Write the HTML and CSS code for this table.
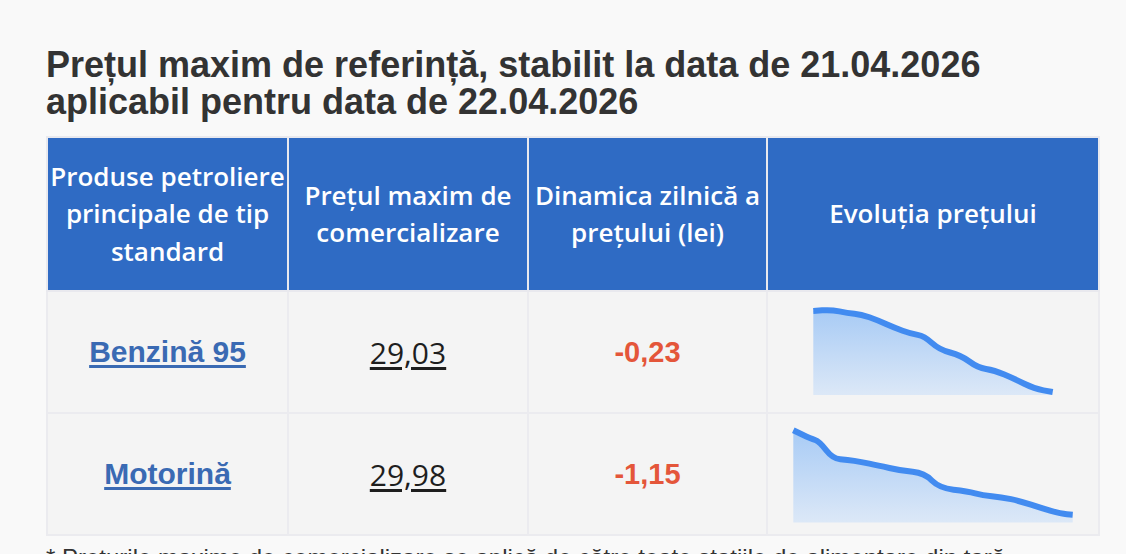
FILE: index.html
```html
<!DOCTYPE html>
<html lang="ro">
<head>
<meta charset="utf-8">
<title>Prețul maxim de referință</title>
<link rel="stylesheet" href="styles.css">
</head>
<body>
<main class="page">
  <h2 class="title">Prețul maxim de referință, stabilit la data de 21.04.2026<br>aplicabil pentru data de 22.04.2026</h2>
  <table class="prices">
    <colgroup>
      <col class="c1"><col class="c2"><col class="c3"><col class="c4">
    </colgroup>
    <thead>
      <tr>
        <th>Produse petroliere principale de tip standard</th>
        <th>Prețul maxim de comercializare</th>
        <th>Dinamica zilnică a prețului (lei)</th>
        <th>Evoluția prețului</th>
      </tr>
    </thead>
    <tbody>
      <tr>
        <td><a class="product" href="#">Benzină 95</a></td>
        <td><a class="price" href="#">29,03</a></td>
        <td class="delta">-0,23</td>
        <td class="chart-cell">
          <svg class="chart" width="240" height="90" viewBox="0 0 240 90">
            <defs>
              <linearGradient id="g1" x1="0" y1="0" x2="0" y2="1">
                <stop offset="0" stop-color="#a8cbf5"/>
                <stop offset="1" stop-color="#dce8f7"/>
              </linearGradient>
            </defs>
            <path d="M0.3,4 L9.15,3.35 Q18,2.7 26.35,4.35 Q34.7,6 41.35,6.65 Q48,7.3 56.35,10.3 Q64.7,13.3 73,17 Q81.3,20.7 89.65,23.7 Q98,26.7 104.65,27.85 Q111.3,29 118.8,35.85 Q126.3,42.7 137.15,45.5 Q148,48.3 156.35,54.5 Q164.7,60.7 173,62 Q181.3,63.3 191.3,67.5 Q201.3,71.7 211.3,76.7 Q221.3,81.7 230.5,83.35 L239.7,85 L239.7,88 L0.3,88 Z" fill="url(#g1)"/>
            <path d="M0.3,4 L9.15,3.35 Q18,2.7 26.35,4.35 Q34.7,6 41.35,6.65 Q48,7.3 56.35,10.3 Q64.7,13.3 73,17 Q81.3,20.7 89.65,23.7 Q98,26.7 104.65,27.85 Q111.3,29 118.8,35.85 Q126.3,42.7 137.15,45.5 Q148,48.3 156.35,54.5 Q164.7,60.7 173,62 Q181.3,63.3 191.3,67.5 Q201.3,71.7 211.3,76.7 Q221.3,81.7 230.5,83.35 L239.7,85" fill="none" stroke="#428bf0" stroke-width="6" stroke-linejoin="round"/>
          </svg>
        </td>
      </tr>
      <tr>
        <td><a class="product" href="#">Motorină</a></td>
        <td><a class="price" href="#">29,98</a></td>
        <td class="delta">-1,15</td>
        <td class="chart-cell">
          <svg class="chart" width="280" height="98" viewBox="0 0 280 98">
            <defs>
              <linearGradient id="g2" x1="0" y1="0" x2="0" y2="1">
                <stop offset="0" stop-color="#a8cbf5"/>
                <stop offset="1" stop-color="#dce8f7"/>
              </linearGradient>
            </defs>
            <path d="M0.3,5.3 L9.15,9.5 Q18,13.7 22.15,15 Q26.3,16.3 33,25 Q39.7,33.7 47.2,34.2 Q54.7,34.7 61.35,35.85 Q68,37 76.35,38.65 Q84.7,40.3 96.35,43 Q108,45.7 119.65,46.85 Q131.3,48 138.8,55.5 Q146.3,63 160.5,64.65 Q174.7,66.3 182.2,68.3 Q189.7,70.3 198.85,71.15 Q208,72 218,74.15 Q228,76.3 238,79.65 Q248,83 258,85.85 Q268,88.7 273.85,89.2 L279.7,89.7 L279.7,97.5 L0.3,97.5 Z" fill="url(#g2)"/>
            <path d="M0.3,5.3 L9.15,9.5 Q18,13.7 22.15,15 Q26.3,16.3 33,25 Q39.7,33.7 47.2,34.2 Q54.7,34.7 61.35,35.85 Q68,37 76.35,38.65 Q84.7,40.3 96.35,43 Q108,45.7 119.65,46.85 Q131.3,48 138.8,55.5 Q146.3,63 160.5,64.65 Q174.7,66.3 182.2,68.3 Q189.7,70.3 198.85,71.15 Q208,72 218,74.15 Q228,76.3 238,79.65 Q248,83 258,85.85 Q268,88.7 273.85,89.2 L279.7,89.7" fill="none" stroke="#428bf0" stroke-width="6" stroke-linejoin="round"/>
          </svg>
        </td>
      </tr>
    </tbody>
  </table>
  <p class="note">* Prețurile maxime de comercializare se aplică de către toate stațiile de alimentare din țară</p>
</main>
</body>
</html>
```

FILE: styles.css
```css
html, body {
  margin: 0;
  padding: 0;
  background: #f9f9f9;
}

.page {
  width: 1052px;
  margin-left: 46px;
  padding-top: 46px;
}

.title {
  margin: 0 0 16px 0;
  font-family: "Liberation Sans", Arial, sans-serif;
  font-weight: bold;
  font-size: 36px;
  line-height: 37px;
  color: #333333;
  white-space: nowrap;
}

.prices {
  width: 1052px;
  border-collapse: collapse;
  table-layout: fixed;
  border: 2px solid #e9e9ee;
}

.c1 { width: 241px; }
.c2 { width: 240px; }
.c3 { width: 239px; }
.c4 { width: 332px; }

.prices th {
  background: #2f6bc4;
  color: #ffffff;
  font-family: "Open Sans", sans-serif;
  font-weight: 600;
  font-size: 26px;
  line-height: 37.5px;
  height: 154px;
  padding: 0;
  text-align: center;
  vertical-align: middle;
  border: 2px solid #e9e9ee;
  box-sizing: border-box;
}

.prices td {
  background: #f4f4f4;
  height: 122px;
  padding: 0;
  text-align: center;
  vertical-align: middle;
  border: 2px solid #ebebef;
  box-sizing: border-box;
}

.product {
  font-family: "Liberation Sans", Arial, sans-serif;
  font-weight: bold;
  font-size: 30px;
  color: #3a6ab3;
  text-decoration: underline;
  text-underline-offset: 3px;
  text-decoration-thickness: 3px;
}

.price {
  font-family: "Open Sans", sans-serif;
  font-size: 30px;
  color: #1e1e1e;
  text-decoration: underline;
  text-underline-offset: 3px;
  text-decoration-thickness: 3px;
}

.delta {
  font-family: "Liberation Sans", Arial, sans-serif;
  font-weight: bold;
  font-size: 29px;
  color: #e4563a;
}

.chart-cell {
  line-height: 0;
}

.chart {
  display: inline-block;
  overflow: visible;
  vertical-align: middle;
}

.note {
  margin: 8px 0 0 0;
  font-family: "Liberation Sans", Arial, sans-serif;
  font-size: 24px;
  color: #333333;
  white-space: nowrap;
}
```
